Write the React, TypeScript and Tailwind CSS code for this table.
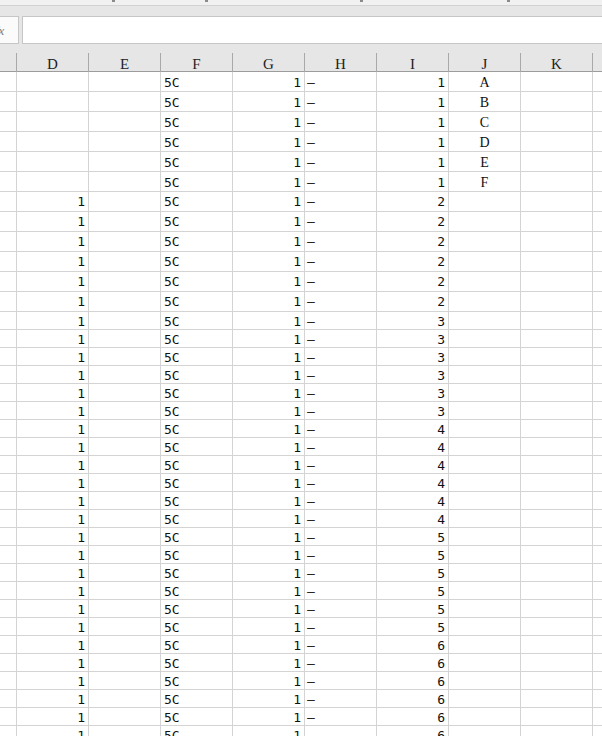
import React from "react";

const cols = ["", "D", "E", "F", "G", "H", "I", "J", "K", ""];

type Row = { d: string; i: number; j: string; h: number };

const rows: Row[] = Array.from({ length: 36 }, (_, k) => ({
  d: k < 6 ? "" : "1",
  i: k < 6 ? 1 : Math.floor((k - 6) / 6) + 2,
  j: k < 6 ? "ABCDEF"[k] : "",
  h: k < 12 ? 20 : 18,
}));

const cellFont = { fontFamily: '"DejaVu Sans Mono", "Liberation Mono", monospace' };

export default function App() {
  return (
    <div className="w-[602px] h-[736px] overflow-hidden bg-[#e6e6e6] select-none">
      {/* top strip */}
      <div className="h-[5px] bg-[#f1f1f1] flex items-start">
        <div className="ml-[112px] w-[3px] h-[2px] bg-[#8a8a8a]" />
        <div className="ml-[90px] w-[3px] h-[2px] bg-[#8a8a8a]" />
        <div className="ml-[152px] w-[3px] h-[2px] bg-[#8a8a8a]" />
        <div className="ml-[144px] w-[3px] h-[2px] bg-[#8a8a8a]" />
      </div>
      <div className="h-[1px] bg-[#d2d2d2]" />
      <div className="h-[10px]" />
      {/* formula bar */}
      <div className="flex h-[28px]">
        <div className="w-[19px] h-full bg-[#fbfbfb] border border-l-0 border-[#c6c6c6] overflow-hidden flex items-center">
          <span
            className="ml-[-5px] text-[13px] italic text-[#808080] leading-none"
            style={{ fontFamily: '"Liberation Serif", serif' }}
          >
            fx
          </span>
        </div>
        <div className="w-[3px]" />
        <div className="flex-1 h-full bg-white border border-r-0 border-[#c6c6c6]" />
      </div>
      <div className="h-[9px]" />
      {/* column header */}
      <div className="grid grid-cols-[17px_repeat(8,72px)_1fr] h-[19px] border-b border-[#9c9c9c] bg-[#e6e6e6]">
        {cols.map((c, idx) => (
          <div
            key={idx}
            className={`flex items-center justify-center text-[15px] text-[#222] ${
              idx < cols.length - 1 ? "border-r border-[#a9a9a9]" : ""
            }`}
            style={{ fontFamily: '"Liberation Serif", serif' }}
          >
            {c}
          </div>
        ))}
      </div>
      {/* rows */}
      <div className="bg-white">
        {rows.map((r, k) => (
          <div
            key={k}
            className="grid grid-cols-[17px_repeat(8,72px)_1fr] border-b border-[#d4d4d4] text-[13px] text-[#111]"
            style={{ height: r.h }}
          >
            <div className="border-r border-[#d4d4d4]" />
            <div className="border-r border-[#d4d4d4] flex items-center justify-end pr-[3px]" style={cellFont}>
              {r.d}
            </div>
            <div className="border-r border-[#d4d4d4]" />
            <div className="border-r border-[#d4d4d4] flex items-center pl-[3px]" style={cellFont}>
              5C
            </div>
            <div className="border-r border-[#d4d4d4] flex items-center justify-end pr-[3px]" style={cellFont}>
              1
            </div>
            <div className="border-r border-[#d4d4d4] flex items-center pl-[2px]" style={cellFont}>
              –
            </div>
            <div className="border-r border-[#d4d4d4] flex items-center justify-end pr-[3px]" style={cellFont}>
              {r.i}
            </div>
            <div
              className="border-r border-[#d4d4d4] flex items-center justify-center text-[14px]"
              style={{ fontFamily: '"Liberation Serif", serif' }}
            >
              {r.j}
            </div>
            <div className="border-r border-[#d4d4d4]" />
            <div />
          </div>
        ))}
      </div>
    </div>
  );
}
